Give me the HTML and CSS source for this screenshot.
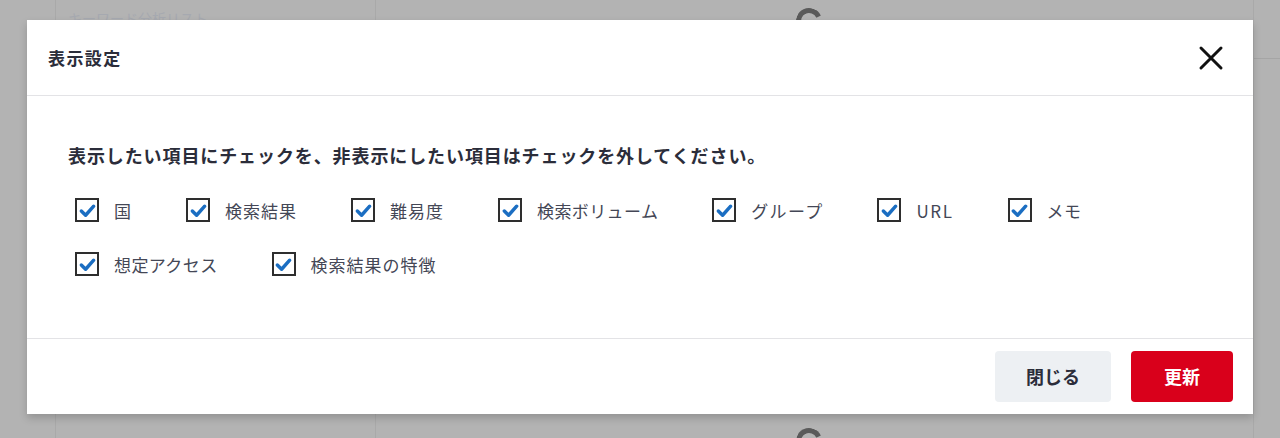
FILE: index.html
```html
<!DOCTYPE html>
<html lang="ja">
<head>
<meta charset="utf-8">
<link rel="stylesheet" href="styles.css">
</head>
<body>
<div class="backdrop">
  <div class="bg-col bg-col-a"><span class="bg-text">キーワード分析リスト</span></div>
  <div class="bg-col bg-col-b">
    <div class="spinner spinner-top"></div>
    <div class="spinner spinner-bottom"></div>
  </div>
  <div class="bg-col bg-col-c"></div>
</div>

<div class="modal">
  <div class="modal-header">
    <h2 class="modal-title">表示設定</h2>
    <button class="close-btn" aria-label="閉じる">
      <svg width="26" height="26" viewBox="0 0 26 26"><path d="M3 3 L23 23 M23 3 L3 23" stroke="#111" stroke-width="3" stroke-linecap="round" fill="none"/></svg>
    </button>
  </div>
  <div class="modal-body">
    <p class="instruction">表示したい項目にチェックを、非表示にしたい項目はチェックを外してください。</p>
    <ul class="check-list">
      <li class="check-item"><span class="box"><svg viewBox="0 0 20 20"><path d="M3.5 10.5 L8 15 L16.5 5.5" stroke="#1b6ec2" stroke-width="3.6" fill="none" stroke-linecap="round" stroke-linejoin="round"/></svg></span><span class="label">国</span></li>
      <li class="check-item"><span class="box"><svg viewBox="0 0 20 20"><path d="M3.5 10.5 L8 15 L16.5 5.5" stroke="#1b6ec2" stroke-width="3.6" fill="none" stroke-linecap="round" stroke-linejoin="round"/></svg></span><span class="label">検索結果</span></li>
      <li class="check-item"><span class="box"><svg viewBox="0 0 20 20"><path d="M3.5 10.5 L8 15 L16.5 5.5" stroke="#1b6ec2" stroke-width="3.6" fill="none" stroke-linecap="round" stroke-linejoin="round"/></svg></span><span class="label">難易度</span></li>
      <li class="check-item"><span class="box"><svg viewBox="0 0 20 20"><path d="M3.5 10.5 L8 15 L16.5 5.5" stroke="#1b6ec2" stroke-width="3.6" fill="none" stroke-linecap="round" stroke-linejoin="round"/></svg></span><span class="label kana">検索ボリューム</span></li>
      <li class="check-item"><span class="box"><svg viewBox="0 0 20 20"><path d="M3.5 10.5 L8 15 L16.5 5.5" stroke="#1b6ec2" stroke-width="3.6" fill="none" stroke-linecap="round" stroke-linejoin="round"/></svg></span><span class="label kana-wide">グループ</span></li>
      <li class="check-item"><span class="box"><svg viewBox="0 0 20 20"><path d="M3.5 10.5 L8 15 L16.5 5.5" stroke="#1b6ec2" stroke-width="3.6" fill="none" stroke-linecap="round" stroke-linejoin="round"/></svg></span><span class="label latin">URL</span></li>
      <li class="check-item"><span class="box"><svg viewBox="0 0 20 20"><path d="M3.5 10.5 L8 15 L16.5 5.5" stroke="#1b6ec2" stroke-width="3.6" fill="none" stroke-linecap="round" stroke-linejoin="round"/></svg></span><span class="label kana">メモ</span></li>
      <li class="check-item"><span class="box"><svg viewBox="0 0 20 20"><path d="M3.5 10.5 L8 15 L16.5 5.5" stroke="#1b6ec2" stroke-width="3.6" fill="none" stroke-linecap="round" stroke-linejoin="round"/></svg></span><span class="label kana">想定アクセス</span></li>
      <li class="check-item"><span class="box"><svg viewBox="0 0 20 20"><path d="M3.5 10.5 L8 15 L16.5 5.5" stroke="#1b6ec2" stroke-width="3.6" fill="none" stroke-linecap="round" stroke-linejoin="round"/></svg></span><span class="label">検索結果の特徴</span></li>
    </ul>
  </div>
  <div class="modal-footer">
    <button class="btn btn-secondary">閉じる</button>
    <button class="btn btn-primary">更新</button>
  </div>
</div>
</body>
</html>
```

FILE: styles.css
```css
* { box-sizing: border-box; }
html, body {
  margin: 0;
  padding: 0;
  width: 1280px;
  height: 438px;
  overflow: hidden;
  background: #b3b3b3;
  font-family: "Noto Sans CJK JP", "Noto Sans", sans-serif;
}

.backdrop {
  display: flex;
  height: 438px;
  padding-left: 55px;
}
.bg-col {
  position: relative;
  border-left: 1px solid #a9a9a9;
  height: 100%;
}
.bg-col-a { width: 320px; }
.bg-col-b { width: 878px; }
.bg-col-c { flex: 1; }
.bg-col-c::before {
  content: "";
  display: block;
  margin-top: 58px;
  border-top: 1px solid #a5a5a5;
}
.bg-text {
  display: block;
  padding: 8px 0 0 12px;
  font-size: 14px;
  color: #a6a9b0;
}
.spinner {
  position: absolute;
  left: 420px;
  width: 26px;
  height: 26px;
  border-radius: 50%;
  border: 5px solid transparent;
  border-top-color: #5a5a5a;
  border-left-color: #5a5a5a;
  transform: rotate(20deg);
}
.spinner-top { top: 8px; }
.spinner-bottom { top: 428px; }

.modal {
  position: absolute;
  top: 20px;
  left: 27px;
  width: 1226px;
  height: 394px;
  background: #fff;
  box-shadow: 0 4px 8px rgba(0, 0, 0, 0.18);
  display: flex;
  flex-direction: column;
}

.modal-header {
  height: 76px;
  display: flex;
  align-items: center;
  justify-content: space-between;
  padding: 0 29px 0 21px;
  border-bottom: 1px solid #e3e3e6;
}
.modal-title {
  margin: 0;
  font-size: 17px;
  letter-spacing: 1.4px;
  font-weight: 700;
  color: #2b2d3a;
}
.close-btn {
  background: none;
  border: none;
  padding: 0;
  width: 26px;
  height: 26px;
  display: flex;
  cursor: pointer;
}

.modal-body {
  flex: 1;
  padding: 46px 68px 0 41px;
}
.instruction {
  margin: 0;
  font-size: 18px;
  line-height: 26px;
  letter-spacing: 0.9px;
  font-weight: 700;
  color: #2b2d3a;
}
.check-list {
  list-style: none;
  margin: 30px 0 0 0;
  padding: 0 0 0 7px;
  display: flex;
  flex-wrap: wrap;
  column-gap: 54px;
  row-gap: 30px;
}
.check-item {
  display: flex;
  align-items: center;
  height: 24px;
}
.box {
  width: 24px;
  height: 24px;
  border: 2px solid #2e2e2e;
  display: flex;
  align-items: center;
  justify-content: center;
  margin-right: 15px;
  background: #fff;
}
.box svg {
  width: 19px;
  height: 19px;
}
.label {
  font-size: 17px;
  letter-spacing: 1px;
  color: #444756;
}
.label.kana {
  letter-spacing: 0.4px;
}
.label.kana-wide {
  letter-spacing: 1.3px;
}
.label.latin {
  letter-spacing: 1.6px;
}

.modal-footer {
  height: 76px;
  border-top: 1px solid #e3e3e6;
  display: flex;
  align-items: center;
  justify-content: flex-end;
  gap: 20px;
  padding: 0 20px 1px 0;
}
.btn {
  height: 51px;
  border: none;
  border-radius: 4px;
  font-family: inherit;
  font-size: 18px;
  font-weight: 700;
  cursor: pointer;
}
.btn-secondary {
  width: 116px;
  background: #edf0f3;
  color: #2b2d3a;
}
.btn-primary {
  width: 102px;
  background: #d9001b;
  color: #fff;
}
```
